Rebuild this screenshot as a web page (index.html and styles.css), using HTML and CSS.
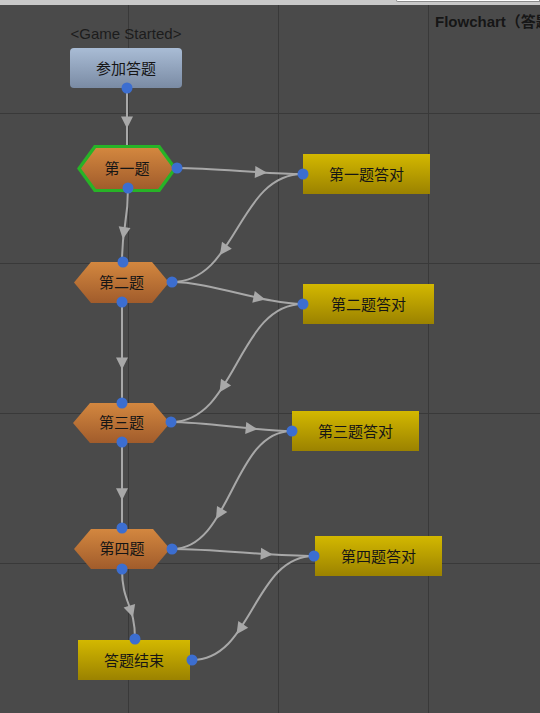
FILE: index.html
```html
<!DOCTYPE html>

<html>
  <head>
    <meta charset="UTF-8">
    <title>Flowchart</title>
    <link rel="stylesheet" href="styles.css">
  </head>
  <body>
    <div class="toolbar">
      <div class="search"></div>
    </div>

    <div class="canvas">
      <svg id="edges" class="layer" viewBox="0 5 540 708"></svg>

      <div class="title">Flowchart（答题）</div>

      <div class="start">
        <span class="event">&lt;Game Started&gt;</span>
        <div class="block join">参加答题</div>
      </div>

      <div class="block hex q1 selected"><span>第一题</span></div>
      <div class="block hex q2"><span>第二题</span></div>
      <div class="block hex q3"><span>第三题</span></div>
      <div class="block hex q4"><span>第四题</span></div>

      <div class="block gold a1">第一题答对</div>
      <div class="block gold a2">第二题答对</div>
      <div class="block gold a3">第三题答对</div>
      <div class="block gold a4">第四题答对</div>
      <div class="block gold finish">答题结束</div>

      <svg id="ports" class="layer over" viewBox="0 5 540 708"></svg>
    </div>

    <script src="script.js"></script>
  </body>
</html>
```

FILE: styles.css
```css
body {
  margin: 0;
  width: 540px;
  height: 713px;
  overflow: hidden;
  background: #4a4a4a;
  font-family: "Liberation Sans", "Noto Sans CJK SC", sans-serif;
}

.toolbar {
  height: 5px;
  background: #c9c9c9;
  display: flex;
  justify-content: flex-end;
}

.search {
  width: 142px;
  height: 1px;
  background: #fff;
  border: 1px solid #8c8c8c;
  border-top: none;
  border-radius: 0 0 0 3px;
}

.canvas {
  position: relative;
  height: 708px;
  overflow: hidden;
  background-color: #4a4a4a;
  background-image:
    linear-gradient(to right, #393939 1px, transparent 1px),
    linear-gradient(to bottom, #393939 1px, transparent 1px);
  background-size: 150px 150px;
  background-position: 128px 108px;
}

.layer {
  position: absolute;
  left: 0;
  top: 0;
  width: 540px;
  height: 708px;
}

.layer.over {
  z-index: 2;
}

.title {
  position: absolute;
  left: 435px;
  top: 5px;
  font-size: 15px;
  font-weight: bold;
  color: #161616;
  white-space: nowrap;
}

.start {
  position: absolute;
  left: 60px;
  top: 20px;
  width: 132px;
  display: flex;
  flex-direction: column;
  align-items: center;
  gap: 5px;
  z-index: 1;
}

.event {
  font-size: 15px;
  line-height: 18px;
  color: #1c1c1c;
  white-space: nowrap;
}

.block {
  position: absolute;
  display: flex;
  align-items: center;
  justify-content: center;
  height: 40px;
  font-family: "Noto Sans CJK SC", sans-serif;
  font-size: 15px;
  line-height: 18px;
  color: #151515;
  z-index: 1;
}

.join {
  position: static;
  width: 112px;
  border-radius: 4px;
  background: linear-gradient(#a9bcd5, #7a8ba4);
}

.gold {
  background: linear-gradient(#d3b800, #9b8200);
}

/* question blocks are drawn as hexagons */
.hex {
  clip-path: polygon(17px 0, calc(100% - 17px) 0, 100% 50%, calc(100% - 17px) 100%, 17px 100%, 0 50%);
  background: linear-gradient(#d3873f, #a15c2b);
}

.hex span {
  position: relative;
  top: -1px;
}

.hex.selected {
  background: #27b327;
}

.hex.selected::before {
  content: "";
  position: absolute;
  inset: 3px 4px;
  clip-path: polygon(15px 0, calc(100% - 15px) 0, 100% 50%, calc(100% - 15px) 100%, 15px 100%, 0 50%);
  background: linear-gradient(#d3873f, #a15c2b);
}

.q1 { left: 77px; top: 140px; width: 100px; height: 47px; }
.q2 { left: 74px; top: 257px; width: 95px; height: 41px; }
.q3 { left: 73px; top: 398px; width: 97px; }
.q4 { left: 74px; top: 524px; width: 96px; }

.a1 { left: 303px; top: 149px; width: 127px; }
.a2 { left: 303px; top: 279px; width: 131px; }
.a3 { left: 292px; top: 406px; width: 127px; }
.a4 { left: 315px; top: 531px; width: 127px; }
.finish { left: 78px; top: 635px; width: 112px; }
```

FILE: script.js
```js
const SVG_NS = 'http://www.w3.org/2000/svg';

// x1, y1, x2, y2, bend ('v' leaves/enters vertically, 'h' horizontally), how far the handles reach
const links = [
  [127, 88, 127, 145, 'v', 0.5],
  [128, 188, 122, 262, 'v', 0.5],
  [122, 302, 122, 403, 'v', 0.5],
  [122, 442, 122, 528, 'v', 0.5],
  [122, 569, 135, 639, 'v', 0.5],
  [177, 168, 303, 174, 'h', 0.3],
  [172, 282, 303, 304, 'h', 0.3],
  [171, 422, 292, 431, 'h', 0.3],
  [172, 549, 314, 556, 'h', 0.3],
  [303, 174, 172, 282, 'h', 0.5],
  [303, 304, 171, 422, 'h', 0.5],
  [292, 431, 172, 549, 'h', 0.5],
  [314, 556, 192, 660, 'h', 0.5],
];

const portPoints = [
  [127, 88], [177, 168], [128, 188], [303, 174],
  [123, 262], [172, 282], [122, 302], [303, 304],
  [122, 403], [171, 422], [122, 442], [292, 431],
  [122, 528], [172, 549], [122, 569], [314, 556],
  [135, 639], [192, 660],
];

const make = (tag, attrs) => {
  const el = document.createElementNS(SVG_NS, tag);
  for (const k in attrs) el.setAttribute(k, attrs[k]);
  return el;
};

const controls = ([x1, y1, x2, y2, bend, reach]) => {
  if (bend === 'v') {
    const d = (y2 - y1) * reach;
    return [[x1, y1], [x1, y1 + d], [x2, y2 - d], [x2, y2]];
  }
  const d = (x2 - x1) * reach;
  return [[x1, y1], [x1 + d, y1], [x2 - d, y2], [x2, y2]];
};

const pointAt = (p, t) => {
  const m = 1 - t;
  const a = m * m * m, b = 3 * m * m * t, c = 3 * m * t * t, e = t * t * t;
  return [0, 1].map(i => a * p[0][i] + b * p[1][i] + c * p[2][i] + e * p[3][i]);
};

const slopeAt = (p, t) => {
  const m = 1 - t;
  return [0, 1].map(i =>
    3 * m * m * (p[1][i] - p[0][i]) +
    6 * m * t * (p[2][i] - p[1][i]) +
    3 * t * t * (p[3][i] - p[2][i]));
};

const edgeLayer = document.getElementById('edges');

for (const link of links) {
  const p = controls(link);
  edgeLayer.appendChild(make('path', {
    d: `M${p[0]} C${p[1]} ${p[2]} ${p[3]}`,
    fill: 'none',
    stroke: '#a8a8a8',
    'stroke-width': 2,
  }));

  // arrow head a bit past the middle of the curve
  const t = link[5] < 0.5 ? 0.66 : 0.64;
  const [cx, cy] = pointAt(p, t);
  const [dx, dy] = slopeAt(p, t);
  const len = Math.hypot(dx, dy);
  const ux = dx / len, uy = dy / len;
  const nx = -uy, ny = ux;
  const pts = [
    [cx + ux * 6, cy + uy * 6],
    [cx - ux * 6 + nx * 6, cy - uy * 6 + ny * 6],
    [cx - ux * 6 - nx * 6, cy - uy * 6 - ny * 6],
  ];
  edgeLayer.appendChild(make('polygon', {
    points: pts.map(q => q.map(v => v.toFixed(1)).join(',')).join(' '),
    fill: '#a8a8a8',
  }));
}

const portLayer = document.getElementById('ports');
for (const [x, y] of portPoints) {
  portLayer.appendChild(make('circle', { cx: x, cy: y, r: 5.5, fill: '#3c6ed0' }));
}
```
